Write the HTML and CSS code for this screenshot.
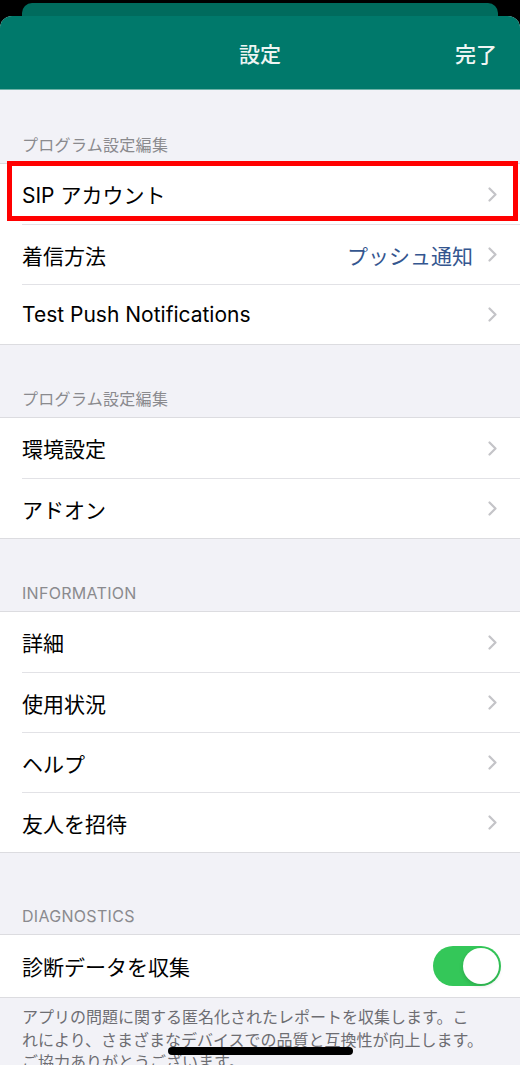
FILE: index.html
```html
<!DOCTYPE html>
<html lang="ja">
<head>
    <meta charset="UTF-8">
    <meta name="viewport" content="width=device-width, initial-scale=1.0">
    <title>設定</title>
    <link rel="stylesheet" href="styles.css">
</head>
<body>
    <div class="card-behind"></div>
    <div class="sheet">
        <header class="nav">
            <span></span>
            <h1 class="nav-title">設定</h1>
            <span class="nav-done">完了</span>
        </header>

        <div class="section-title">プログラム設定編集</div>
        <div class="group">
            <div class="row highlighted">
                <span class="label">SIP アカウント</span>
                <svg class="chevron" width="9" height="15" viewBox="0 0 9 15"><path d="M1.5 1.5 L7.5 7.5 L1.5 13.5"/></svg>
                <div class="highlight-box"></div>
            </div>
            <div class="row">
                <span class="label">着信方法</span>
                <span class="value">プッシュ通知</span>
                <svg class="chevron" width="9" height="15" viewBox="0 0 9 15"><path d="M1.5 1.5 L7.5 7.5 L1.5 13.5"/></svg>
            </div>
            <div class="row">
                <span class="label">Test Push Notifications</span>
                <svg class="chevron" width="9" height="15" viewBox="0 0 9 15"><path d="M1.5 1.5 L7.5 7.5 L1.5 13.5"/></svg>
            </div>
        </div>

        <div class="section-title">プログラム設定編集</div>
        <div class="group">
            <div class="row">
                <span class="label">環境設定</span>
                <svg class="chevron" width="9" height="15" viewBox="0 0 9 15"><path d="M1.5 1.5 L7.5 7.5 L1.5 13.5"/></svg>
            </div>
            <div class="row">
                <span class="label">アドオン</span>
                <svg class="chevron" width="9" height="15" viewBox="0 0 9 15"><path d="M1.5 1.5 L7.5 7.5 L1.5 13.5"/></svg>
            </div>
        </div>

        <div class="section-title">INFORMATION</div>
        <div class="group">
            <div class="row">
                <span class="label">詳細</span>
                <svg class="chevron" width="9" height="15" viewBox="0 0 9 15"><path d="M1.5 1.5 L7.5 7.5 L1.5 13.5"/></svg>
            </div>
            <div class="row">
                <span class="label">使用状況</span>
                <svg class="chevron" width="9" height="15" viewBox="0 0 9 15"><path d="M1.5 1.5 L7.5 7.5 L1.5 13.5"/></svg>
            </div>
            <div class="row">
                <span class="label">ヘルプ</span>
                <svg class="chevron" width="9" height="15" viewBox="0 0 9 15"><path d="M1.5 1.5 L7.5 7.5 L1.5 13.5"/></svg>
            </div>
            <div class="row">
                <span class="label">友人を招待</span>
                <svg class="chevron" width="9" height="15" viewBox="0 0 9 15"><path d="M1.5 1.5 L7.5 7.5 L1.5 13.5"/></svg>
            </div>
        </div>

        <div class="section-title spaced">DIAGNOSTICS</div>
        <div class="group">
            <div class="row tall">
                <span class="label">診断データを収集</span>
                <div class="toggle"><div class="knob"></div></div>
            </div>
        </div>
        <p class="footnote">アプリの問題に関する匿名化されたレポートを収集します。こ<br>れにより、さまざまなデバイスでの品質と互換性が向上します。<br>ご協力ありがとうございます。</p>
    </div>
    <div class="home-indicator"></div>
</body>
</html>
```

FILE: styles.css
```css
body {
    margin: 0;
    background: #000;
    font-family: Inter, "Noto Sans CJK JP", sans-serif;
}

.card-behind {
    height: 13px;
    margin: 3px 22px 0;
    background: #006b5d;
    border-radius: 10px 10px 0 0;
}

.sheet {
    background: #f2f2f7;
    border-radius: 12px 12px 0 0;
    overflow: hidden;
    padding-bottom: 40px;
}

.nav {
    display: grid;
    grid-template-columns: 1fr auto 1fr;
    align-items: center;
    height: 73px;
    padding: 0 23px;
    background: #00796b;
    border-bottom: 1px solid #6fb3a8;
    color: #eef5f3;
}

.nav-title {
    margin: 0;
    font-size: 21px;
    font-weight: 500;
}

.nav-done {
    justify-self: end;
    font-size: 21px;
    font-weight: 500;
}

.section-title {
    padding: 45px 22px 0;
    margin-bottom: 9px;
    line-height: 20px;
    font-size: 16px;
    letter-spacing: 0.3px;
    color: #8a8a8e;
}

.section-title.spaced {
    padding-top: 54px;
}

.group {
    background: #fff;
    box-shadow: 0 -1px 0 #dcdce0, 0 1px 0 #dcdce0;
}

.row {
    position: relative;
    display: flex;
    align-items: center;
    box-sizing: border-box;
    height: 60px;
    margin-left: 22px;
    padding-right: 23px;
}

.row + .row {
    border-top: 1px solid #e2e2e6;
}

.row.tall {
    height: 62px;
    padding-right: 19px;
}

.label {
    flex: 1;
    font-size: 21px;
    color: #000;
}

.value {
    margin-right: 15px;
    font-size: 21px;
    color: #34568f;
}

.chevron path {
    fill: none;
    stroke: #c4c4c8;
    stroke-width: 2.2;
    stroke-linecap: round;
    stroke-linejoin: round;
}

.highlight-box {
    position: absolute;
    top: -3px;
    left: -15px;
    right: 2px;
    height: 60px;
    box-sizing: border-box;
    border: 5px solid #f00;
}

.toggle {
    display: flex;
    justify-content: flex-end;
    align-items: center;
    width: 68px;
    height: 40px;
    padding: 2px;
    box-sizing: border-box;
    background: #34c759;
    border-radius: 20px;
}

.knob {
    width: 36px;
    height: 36px;
    border-radius: 50%;
    background: #fff;
    box-shadow: 0 2px 4px rgba(0, 0, 0, 0.15);
}

.footnote {
    margin: 0;
    padding: 9px 22px 0;
    font-size: 16px;
    line-height: 22.5px;
    color: #6d6d72;
    white-space: nowrap;
}

.home-indicator {
    position: fixed;
    left: 168px;
    bottom: 10px;
    width: 185px;
    height: 8px;
    border-radius: 4px;
    background: #000;
}
```
